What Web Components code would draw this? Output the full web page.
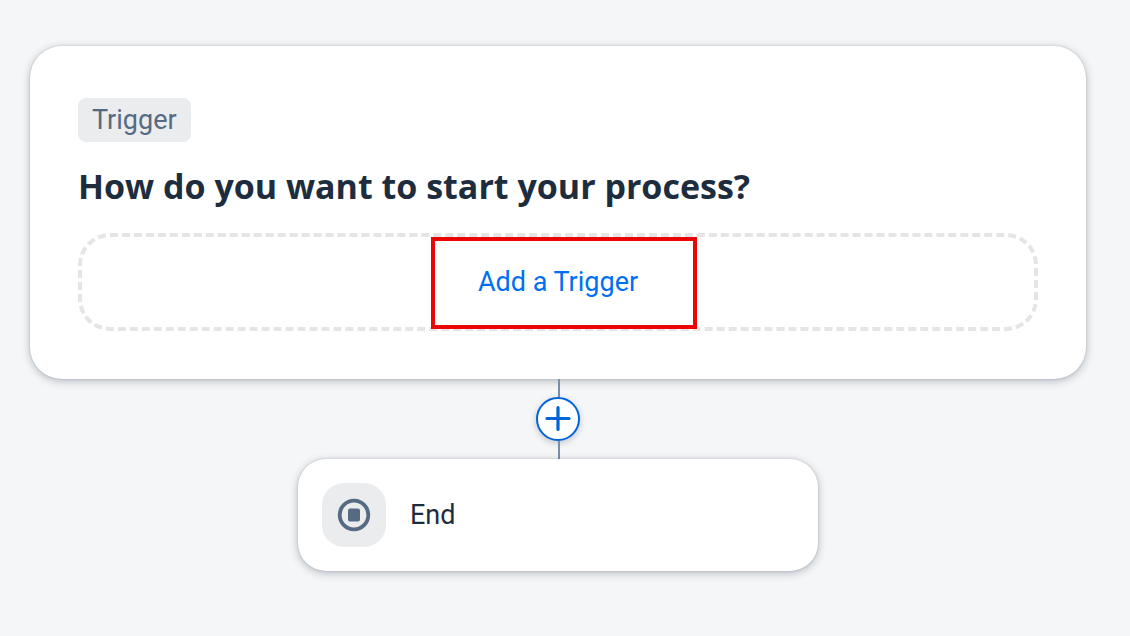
<!DOCTYPE html>
<html lang="en">
<head>
<meta charset="utf-8">
<title>Process builder</title>
<style>
  body { margin: 0; min-height: 100vh; background: #f5f6f7; color: #1d2d3e; font-family: Roboto, "Open Sans", sans-serif; font-size: 27px; line-height: 36px; }
</style>
</head>
<body>
<process-canvas>
  <trigger-card>
    <type-tag slot="tag">Trigger</type-tag>
    <span slot="title">How do you want to start your process?</span>
    <drop-zone>Add a Trigger</drop-zone>
  </trigger-card>
  <step-connector></step-connector>
  <end-step>End</end-step>
</process-canvas>
<script>
  const define = (name, html) => customElements.define(name, class extends HTMLElement {
    constructor() {
      super();
      this.attachShadow({ mode: "open" }).innerHTML = html;
    }
  });

  const cardShadow = "0 0 2px rgba(34,53,72,.2), 0 2px 8px rgba(34,53,72,.32)";

  define("process-canvas", `
    <style>
      :host { display: block; padding: 46px 44px 64px 30px; }
      main { display: flex; flex-direction: column; align-items: center; }
    </style>
    <main><slot></slot></main>`);

  define("trigger-card", `
    <style>
      :host { display: block; box-sizing: border-box; width: 100%; padding: 52px 48px 48px; border-radius: 32px; background: #fff; box-shadow: ${cardShadow}; }
      section { display: flex; flex-direction: column; align-items: flex-start; }
      h2 { margin: 20px 0 23px; font-family: "Open Sans", "Noto Sans", sans-serif; font-size: 34px; line-height: 48px; font-weight: 700; }
      ::slotted(drop-zone) { align-self: stretch; }
    </style>
    <section>
      <slot name="tag"></slot>
      <h2><slot name="title"></slot></h2>
      <slot></slot>
    </section>`);

  define("type-tag", `
    <style>
      :host { display: block; padding: 4px 14px; border-radius: 8px; background: #eaecee; color: #556b82; }
    </style>
    <slot></slot>`);

  define("drop-zone", `
    <style>
      :host { display: flex; justify-content: center; position: relative; padding: 9px; border: 4px dashed #e5e5e5; border-radius: 32px; }
      button { padding: 18px 40px; border: 0; background: none; color: #0070f2; font: inherit; cursor: pointer; }
      .highlight { position: absolute; top: 0; left: calc(50% - 127px); box-sizing: border-box; width: 266px; height: 92px; border: 4px solid #eb0505; pointer-events: none; }
    </style>
    <button type="button"><slot></slot></button>
    <div class="highlight"></div>`);

  define("step-connector", `
    <style>
      :host { display: flex; flex-direction: column; align-items: center; }
      .line { width: 2px; height: 18px; margin-left: 2px; background: #788fa6; }
      button { display: block; box-sizing: border-box; width: 44px; height: 44px; padding: 0; border: 2px solid #0064d9; border-radius: 50%; background: #fff; box-shadow: 0 2px 6px rgba(34,53,72,.25); cursor: pointer; }
      svg { display: block; }
    </style>
    <div class="line"></div>
    <button type="button" aria-label="Add step">
      <svg width="40" height="40" viewBox="0 0 40 40" fill="none" stroke="#0064d9" stroke-width="3.2" stroke-linecap="round"><path d="M20 8.5v22M9 19.5h22"/></svg>
    </button>
    <div class="line"></div>`);

  define("end-step", `
    <style>
      :host { display: flex; align-items: center; gap: 24px; box-sizing: border-box; width: 520px; max-width: 100%; padding: 24px; border-radius: 28px; background: #fff; box-shadow: ${cardShadow}; }
      .icon { display: grid; place-items: center; width: 64px; height: 64px; border-radius: 22px; background: #eaecee; }
    </style>
    <div class="icon">
      <svg width="34" height="34" viewBox="0 0 34 34" fill="none"><circle cx="17" cy="17" r="14.3" stroke="#556b82" stroke-width="3.8"/><rect x="11" y="10.5" width="12" height="13" rx="2" fill="#556b82"/></svg>
    </div>
    <slot></slot>`);
</script>
</body>
</html>
